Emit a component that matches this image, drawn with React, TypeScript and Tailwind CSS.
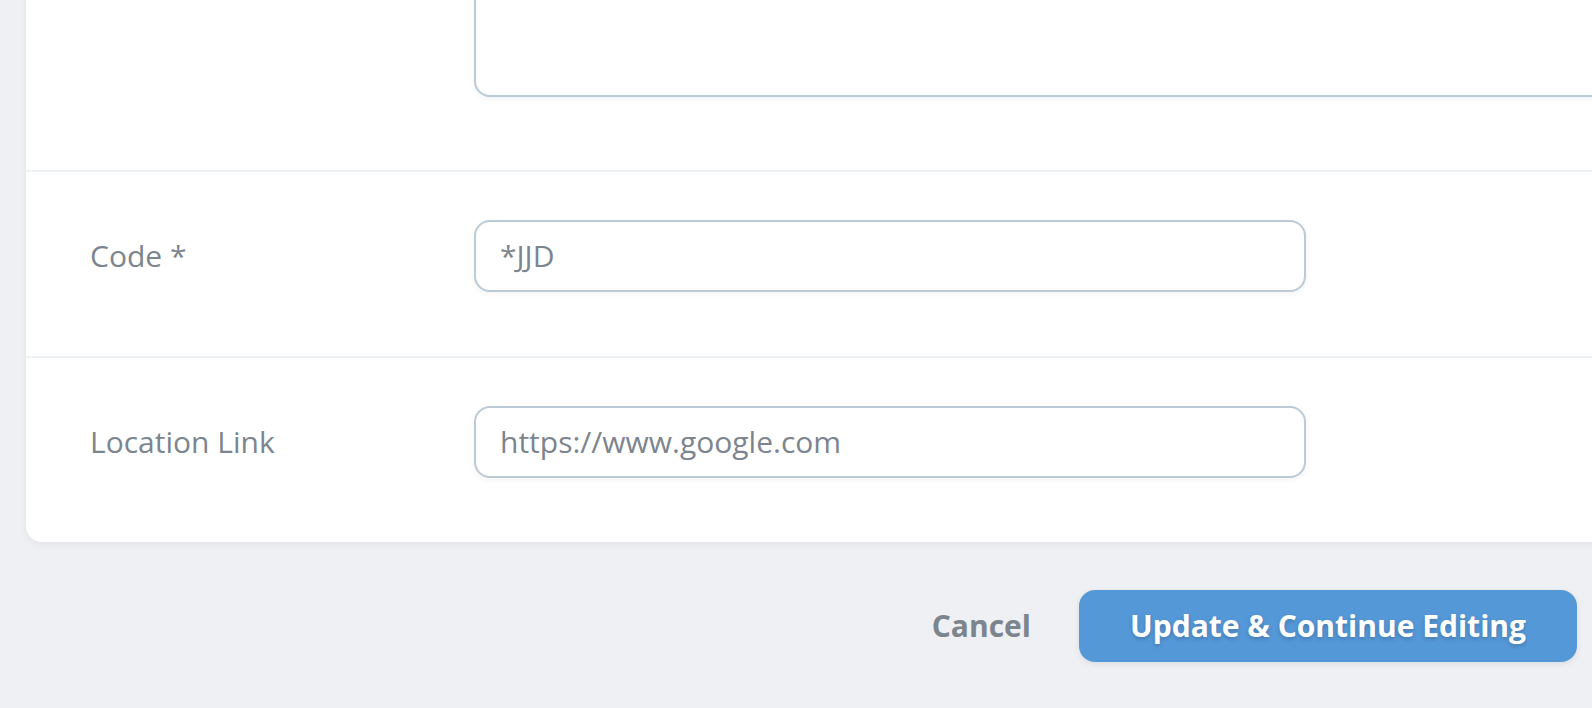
const FONT = "font-['Open_Sans',_'Noto_Sans',_sans-serif]"

function TextInput({ value }: { value: string }) {
  return (
    <div className="h-[72px] w-full rounded-2xl border-2 border-[#bacad6] bg-white shadow-[0_2px_6px_rgba(0,0,0,0.05)] flex items-center px-[24px]">
      <span className="text-[30px] leading-none text-[#7c858e]">{value}</span>
    </div>
  )
}

function FieldRow({ label, value, divider }: { label: string; value: string; divider?: boolean }) {
  return (
    <div className={`flex ${divider ? 'border-b-2 border-[#eef1f4]' : ''}`}>
      <div className="w-[384px] flex-none px-16 pt-12 pb-[64px] flex items-center">
        <span className="text-[30px] leading-none text-[#7c858e]">{label}</span>
      </div>
      <div className="w-[960px] flex-none px-16 pt-12 pb-[64px]">
        <TextInput value={value} />
      </div>
    </div>
  )
}

export default function App() {
  return (
    <div className={`w-[1592px] h-[708px] overflow-hidden bg-[#eff0f4] ${FONT}`}>
      <div className="pl-[26px] -mt-[150px]">
        <div className="w-[1920px] bg-white rounded-2xl shadow-[0_2px_8px_rgba(0,0,0,0.06)]">
          {/* textarea row, top cut off */}
          <div className="flex border-b-2 border-[#eef1f4]">
            <div className="w-[384px] flex-none" />
            <div className="flex-1 px-16 pt-12 pb-[73px]">
              <div className="h-[199px] w-full rounded-2xl border-2 border-[#bacad6] bg-white shadow-[0_2px_6px_rgba(0,0,0,0.05)]" />
            </div>
          </div>

          <FieldRow label="Code *" value="*JJD" divider />
          <FieldRow label="Location Link" value="https://www.google.com" />
        </div>
      </div>

      <div className="flex items-center justify-end pr-[15px] mt-[48px]">
        <button className="text-[30px] font-bold text-[#7c858e] mr-12 leading-none">Cancel</button>
        <button className="h-[72px] w-[498px] rounded-2xl bg-[#5598d8] text-white text-[30px] font-bold leading-none shadow-[0_2px_6px_rgba(0,0,0,0.08)] [text-shadow:0_2px_4px_rgba(0,0,0,0.2)]">
          Update &amp; Continue Editing
        </button>
      </div>
    </div>
  )
}
